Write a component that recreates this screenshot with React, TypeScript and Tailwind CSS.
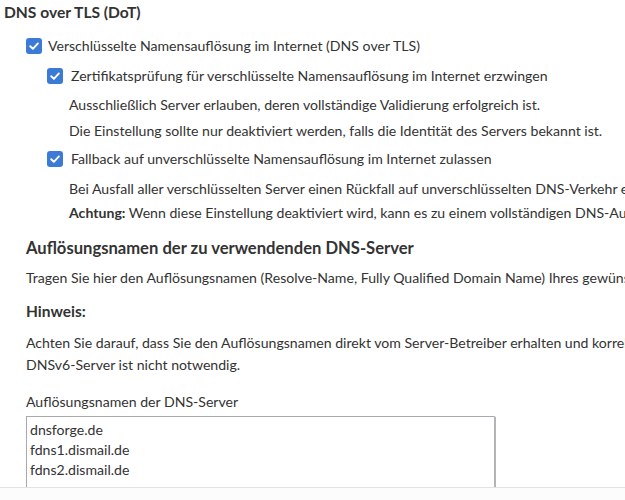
import React from 'react'

function Check({ className = '' }: { className?: string }) {
    return (
        <span className={"inline-flex shrink-0 items-center justify-center w-[16px] h-[16px] rounded-[3px] bg-[#3b7bd6] " + className}>
            <svg width="12" height="12" viewBox="0 0 12 12" fill="none">
                <path d="M2.2 6.2 L4.9 8.8 L9.9 3.4" stroke="white" strokeWidth="1.9" strokeLinecap="round" strokeLinejoin="round" />
            </svg>
        </span>
    )
}

export default function App() {
    const font = { fontFamily: 'Lato, "Noto Sans", sans-serif' }

    return (
        <div className="w-[625px] h-[500px] overflow-hidden bg-white text-[#333] text-[14.1px]" style={font}>
            <div className="h-[487px] overflow-hidden">
                <h2 className="pl-[4px] pt-[1px] text-[15.6px] font-bold leading-[22px] text-[#333]">DNS over TLS (DoT)</h2>

                <div className="pl-[26px] mt-[14px] whitespace-nowrap">
                    <label className="flex items-center gap-[6px] h-[18px]">
                        <Check />
                        <span>Verschlüsselte Namensauflösung im Internet (DNS over TLS)</span>
                    </label>

                    <div className="pl-[21px] mt-[12px]">
                        <label className="flex items-center gap-[8px] h-[18px]">
                            <Check />
                            <span>Zertifikatsprüfung für verschlüsselte Namensauflösung im Internet erzwingen</span>
                        </label>
                        <div className="pl-[22px] mt-[11px] flex flex-col gap-[8px] leading-[18px]">
                            <p>Ausschließlich Server erlauben, deren vollständige Validierung erfolgreich ist.</p>
                            <p>Die Einstellung sollte nur deaktiviert werden, falls die Identität des Servers bekannt ist.</p>
                        </div>

                        <label className="flex items-center gap-[8px] h-[18px] mt-[10px]">
                            <Check />
                            <span>Fallback auf unverschlüsselte Namensauflösung im Internet zulassen</span>
                        </label>
                        <div className="pl-[22px] mt-[12px] flex flex-col gap-[6px] leading-[18px]">
                            <p>Bei Ausfall aller verschlüsselten Server einen Rückfall auf unverschlüsselten DNS-Verkehr erlauben.</p>
                            <p><b className="font-bold">Achtung:</b> Wenn diese Einstellung deaktiviert wird, kann es zu einem vollständigen DNS-Ausfall kommen.</p>
                        </div>
                    </div>
                </div>

                <div className="pl-[26px] whitespace-nowrap">
                    <h3 className="mt-[15px] text-[16.6px] font-bold leading-[22px]">Auflösungsnamen der zu verwendenden DNS-Server</h3>
                    <p className="mt-[10px] leading-[18px]">Tragen Sie hier den Auflösungsnamen (Resolve-Name, Fully Qualified Domain Name) Ihres gewünschten DNS-Servers ein.</p>
                    <h4 className="mt-[13px] text-[15.5px] font-bold leading-[22px]">Hinweis:</h4>
                    <p className="mt-[10px] leading-[22px]">Achten Sie darauf, dass Sie den Auflösungsnamen direkt vom Server-Betreiber erhalten und korrekt eingeben.<br />DNSv6-Server ist nicht notwendig.</p>

                    <label className="block mt-[17px] leading-[18px]">Auflösungsnamen der DNS-Server</label>
                    <div className="mt-[5px] w-[470px] h-[100px] border border-[#a9a9ad] border-r-2 border-r-[#b3b3b8] rounded-tr-[2px] px-[3px] pt-[3px] pb-[3px] leading-[20px]">
                        <div>dnsforge.de</div>
                        <div>fdns1.dismail.de</div>
                        <div>fdns2.dismail.de</div>
                    </div>
                </div>
            </div>
            <div className="h-[13px] border-t border-[#e2e2e2] bg-[#fcfcfc]" />
        </div>
    )
}
